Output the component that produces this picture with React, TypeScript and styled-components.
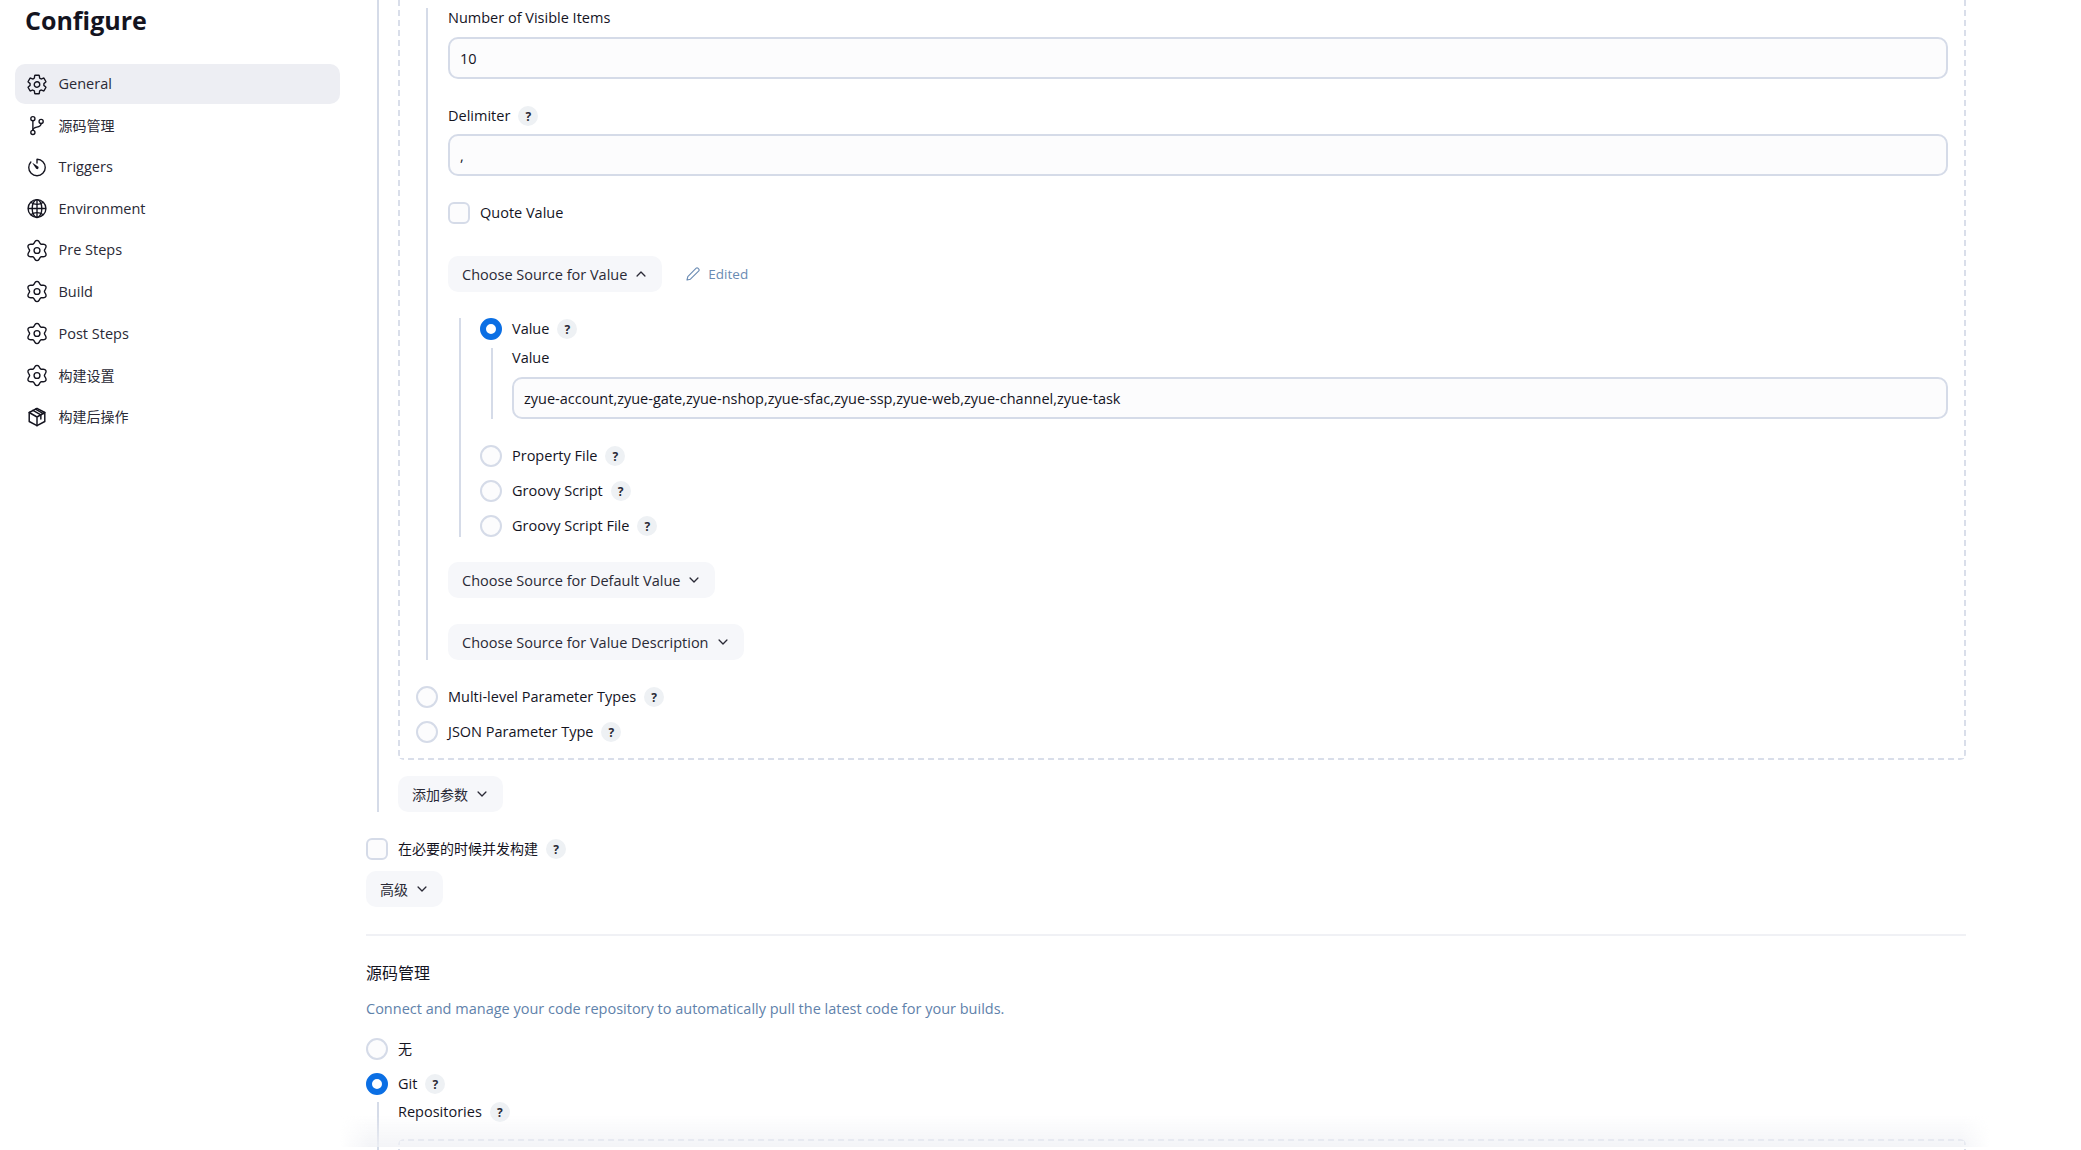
import styled, { createGlobalStyle, css } from 'styled-components';
import { IoSettingsOutline, IoGitBranchOutline, IoTimerOutline, IoGlobeOutline, IoChevronDown, IoChevronUp } from 'react-icons/io5';
import { ReactNode } from 'react';

const FONT = `"Open Sans", "Noto Sans CJK SC", sans-serif`;
const LINE = '#d5dbe8';

const GlobalStyle = createGlobalStyle`
  html, body {
    margin: 0;
    padding: 0;
    background: #fff;
    color: #14141f;
    font-family: ${FONT};
    font-size: 14.5px;
    overflow: hidden;
  }
  * { box-sizing: border-box; }
`;

// six lobed cog outline, sampled so the lobes stay round
const lobes = Array.from({ length: 73 }, (_, i) => {
    const a = (i / 72) * Math.PI * 2;
    const r = 9.6 + 1.5 * Math.cos(6 * a);
    return `${(12 + r * Math.sin(a)).toFixed(2)} ${(12 - r * Math.cos(a)).toFixed(2)}`;
}).join('L');

function CogIcon() {
    return (
        <svg viewBox="0 0 24 24" width="23" height="23" fill="none" stroke="currentColor" strokeWidth="1.5" strokeLinejoin="round">
            <path d={`M${lobes}Z`} />
            <circle cx="12" cy="12" r="3.2" />
        </svg>
    );
}

function PackageIcon() {
    return (
        <svg viewBox="0 0 24 24" width="22" height="22" fill="none" stroke="currentColor" strokeWidth="1.6" strokeLinejoin="round" strokeLinecap="round">
            <path d="M12 2.5l8.5 4.6v9.8L12 21.5l-8.5-4.6V7.1z" />
            <path d="M3.5 7.1L12 12l8.5-4.9M12 12v9.5" />
            <path d="M7.6 4.7l8.6 5M10.4 3.4l8.4 4.9M16.2 9.7v4.6" />
        </svg>
    );
}

const navItems = [
    { label: 'General', icon: <IoSettingsOutline />, active: true },
    { label: '源码管理', icon: <IoGitBranchOutline />, cjk: true },
    { label: 'Triggers', icon: <IoTimerOutline /> },
    { label: 'Environment', icon: <IoGlobeOutline /> },
    { label: 'Pre Steps', icon: <CogIcon /> },
    { label: 'Build', icon: <CogIcon /> },
    { label: 'Post Steps', icon: <CogIcon /> },
    { label: '构建设置', icon: <CogIcon />, cjk: true },
    { label: '构建后操作', icon: <PackageIcon />, cjk: true },
];

function Help() {
    return <HelpBadge>?</HelpBadge>;
}

function Dropdown({ label, open, mt, cjk }: { label: string; open?: boolean; mt: number; cjk?: boolean }) {
    return (
        <DropButton $mt={mt} $cjk={cjk}>
            {label}
            {open ? <IoChevronUp size={14} /> : <IoChevronDown size={14} />}
        </DropButton>
    );
}

function Radio({ label, checked, mt, help = true, cjk }: { label: ReactNode; checked?: boolean; mt: number; help?: boolean; cjk?: boolean }) {
    return (
        <ChoiceRow $mt={mt}>
            <RadioDot $checked={checked} />
            <ChoiceLabel $cjk={cjk}>{label}</ChoiceLabel>
            {help && <Help />}
        </ChoiceRow>
    );
}

export default function App() {
    return (
        <Page>
            <GlobalStyle />
            <Sidebar>
                <Title>Configure</Title>
                <Nav>
                    {navItems.map(item => (
                        <NavItem key={item.label} $active={item.active} $cjk={item.cjk}>
                            <NavIcon>{item.icon}</NavIcon>
                            <NavText $cjk={item.cjk}>{item.label}</NavText>
                        </NavItem>
                    ))}
                </Nav>
            </Sidebar>
            <Main>
                <ParamIndent>
                    <DashedBox>
                        <ValueIndent>
                            <FieldLabel $mt={16}><FieldText>Number of Visible Items</FieldText></FieldLabel>
                            <TextInput $mt={9} readOnly value="10" />
                            <FieldLabel $mt={27}><FieldText>Delimiter</FieldText><Help /></FieldLabel>
                            <TextInput $mt={8} readOnly value="," />
                            <ChoiceRow $mt={26}>
                                <CheckBox />
                                <ChoiceLabel>Quote Value</ChoiceLabel>
                            </ChoiceRow>
                            <SourceRow>
                                <Dropdown label="Choose Source for Value" open mt={0} />
                                <EditedTag>
                                    <svg viewBox="0 0 16 16" width="16" height="16" fill="none" stroke="currentColor" strokeWidth="1.1" strokeLinejoin="round">
                                        <path d="M2 14l.8-3.4L11.2 2.2a1.2 1.2 0 011.7 0l.9.9a1.2 1.2 0 010 1.7L5.4 13.2z" />
                                    </svg>
                                    Edited
                                </EditedTag>
                            </SourceRow>
                            <SourceIndent>
                                <Radio label="Value" checked mt={0} />
                                <ValueBlock>
                                    <FieldLabel $mt={0}><FieldText>Value</FieldText></FieldLabel>
                                    <TextInput $mt={9} readOnly value="zyue-account,zyue-gate,zyue-nshop,zyue-sfac,zyue-ssp,zyue-web,zyue-channel,zyue-task" />
                                </ValueBlock>
                                <Radio label="Property File" mt={26} />
                                <Radio label="Groovy Script" mt={13} />
                                <Radio label="Groovy Script File" mt={13} />
                            </SourceIndent>
                            <Dropdown label="Choose Source for Default Value" mt={25} />
                            <Dropdown label="Choose Source for Value Description" mt={26} />
                        </ValueIndent>
                        <Radio label="Multi-level Parameter Types" mt={26} />
                        <Radio label="JSON Parameter Type" mt={13} />
                    </DashedBox>
                    <Dropdown label="添加参数" mt={16} cjk />
                </ParamIndent>
                <ChoiceRow $mt={26}>
                    <CheckBox />
                    <ChoiceLabel $cjk>在必要的时候并发构建</ChoiceLabel>
                    <Help />
                </ChoiceRow>
                <Dropdown label="高级" mt={11} cjk />
                <Divider />
                <SectionTitle>源码管理</SectionTitle>
                <SectionDesc>Connect and manage your code repository to automatically pull the latest code for your builds.</SectionDesc>
                <Radio label="无" mt={19} help={false} cjk />
                <Radio label="Git" checked mt={13} />
                <RepoIndent>
                    <FieldLabel $mt={0}><FieldText>Repositories</FieldText><Help /></FieldLabel>
                    <RepoBox />
                </RepoIndent>
            </Main>
            <BottomFade />
        </Page>
    );
}

const dashedEdges = css`
  background-image:
    repeating-linear-gradient(to right, #d9deea 0 6px, transparent 6px 10px),
    repeating-linear-gradient(to right, #d9deea 0 6px, transparent 6px 10px),
    repeating-linear-gradient(to bottom, #d9deea 0 6px, transparent 6px 10px),
    repeating-linear-gradient(to bottom, #d9deea 0 6px, transparent 6px 10px);
  background-repeat: no-repeat;
  background-size: 100% 2px, 100% 2px, 2px 100%, 2px 100%;
  background-position: left top, left bottom, left top, right top;
  border-radius: 6px;
`;

const Page = styled.div`
  display: flex;
  width: 100vw;
  height: 100vh;
  overflow: hidden;
  position: relative;
`;

const Sidebar = styled.aside`
  flex: none;
  width: 366px;
  padding: 0 26px 0 15px;
`;

const Title = styled.h1`
  margin: 4px 0 0 10px;
  height: 32px;
  font-size: 25px;
  line-height: 32px;
  font-weight: 700;
  color: #14141f;
`;

const Nav = styled.nav`
  display: flex;
  flex-direction: column;
  gap: 1.6px;
  margin-top: 28px;
`;

const NavItem = styled.a<{ $active?: boolean; $cjk?: boolean }>`
  display: flex;
  align-items: center;
  gap: 10.5px;
  height: 40px;
  padding-left: 11px;
  border-radius: 10px;
  color: #2a2a36;
  background: ${({ $active }) => ($active ? '#edeef3' : 'transparent')};
`;

const NavText = styled.span<{ $cjk?: boolean }>`
  margin-bottom: 1px;
  font-size: ${({ $cjk }) => ($cjk ? '14px' : '14.5px')};
`;

const NavIcon = styled.span`
  display: flex;
  align-items: center;
  justify-content: center;
  width: 22px;
  height: 22px;
  font-size: 23px;
  color: #14141f;
`;

const Main = styled.main`
  flex: none;
  width: 1600px;
`;

const ParamIndent = styled.div`
  display: flow-root;
  margin-left: 11px;
  padding-left: 19px;
  border-left: 2px solid ${LINE};
  height: 812px;
`;

const DashedBox = styled.div`
  ${dashedEdges}
  margin-top: -10px;
  width: 1568px;
  height: 770px;
  padding: 2px 18px 2px 18px;
`;

const ValueIndent = styled.div`
  margin-left: 10px;
  padding-left: 20px;
  border-left: 2px solid ${LINE};
`;

const FieldLabel = styled.div<{ $mt: number }>`
  display: flex;
  align-items: center;
  gap: 8px;
  height: 20px;
  margin-top: ${({ $mt }) => $mt}px;
`;

const FieldText = styled.span`
  margin-bottom: 2px;
`;

const TextInput = styled.input<{ $mt: number }>`
  display: block;
  width: 100%;
  height: 42px;
  margin-top: ${({ $mt }) => $mt}px;
  padding: 0 10px;
  border: 2px solid ${LINE};
  border-radius: 10px;
  background: #fcfcfd;
  font-family: ${FONT};
  font-size: 14.5px;
  color: #14141f;
  outline: none;
`;

const HelpBadge = styled.span`
  display: inline-flex;
  align-items: center;
  justify-content: center;
  flex: none;
  width: 20px;
  height: 20px;
  border-radius: 50%;
  background: #eef1f4;
  font-size: 12px;
  font-weight: 700;
  color: #2a2a36;
`;

const ChoiceRow = styled.div<{ $mt: number }>`
  display: flex;
  align-items: center;
  height: 22px;
  margin-top: ${({ $mt }) => $mt}px;
`;

const ChoiceLabel = styled.span<{ $cjk?: boolean }>`
  margin: 0 8px 2px 10px;
  font-size: ${({ $cjk }) => ($cjk ? '14px' : '14.5px')};
`;

const CheckBox = styled.span`
  flex: none;
  width: 22px;
  height: 22px;
  border: 2px solid ${LINE};
  border-radius: 6px;
  background: #fcfcfd;
`;

const RadioDot = styled.span<{ $checked?: boolean }>`
  flex: none;
  width: 22px;
  height: 22px;
  border-radius: 50%;
  border: ${({ $checked }) => ($checked ? '6px solid #0b6fe4' : `2px solid ${LINE}`)};
  background: ${({ $checked }) => ($checked ? '#fff' : '#fcfcfd')};
`;

const DropButton = styled.button<{ $mt: number; $cjk?: boolean }>`
  display: flex;
  align-items: center;
  gap: 7px;
  height: 36px;
  margin-top: ${({ $mt }) => $mt}px;
  padding: 0 14px;
  border: none;
  border-radius: 10px;
  background: #f6f7fa;
  font-family: ${FONT};
  font-size: ${({ $cjk }) => ($cjk ? '14px' : '14.5px')};
  color: #2a2a36;
`;

const SourceRow = styled.div`
  display: flex;
  align-items: center;
  gap: 23px;
  margin-top: 32px;
`;

const EditedTag = styled.span`
  display: flex;
  align-items: center;
  gap: 7px;
  font-size: 13.5px;
  color: #6a8bb3;
`;

const SourceIndent = styled.div`
  margin-top: 26px;
  margin-left: 11px;
  padding-left: 19px;
  border-left: 2px solid ${LINE};
`;

const ValueBlock = styled.div`
  margin-top: 8px;
  margin-left: 11px;
  padding-left: 19px;
  border-left: 2px solid ${LINE};
`;

const Divider = styled.hr`
  height: 2px;
  margin: 27px 0 0;
  border: none;
  background: #f0f1f5;
`;

const SectionTitle = styled.h2`
  height: 22px;
  margin: 26px 0 0;
  font-size: 16px;
  line-height: 22px;
  font-weight: 400;
`;

const SectionDesc = styled.p`
  height: 20px;
  margin: 15px 0 0;
  line-height: 20px;
  color: #5f82ab;
`;

const RepoIndent = styled.div`
  margin-top: 7px;
  margin-left: 11px;
  padding-left: 19px;
  border-left: 2px solid ${LINE};
  height: 60px;
`;

const RepoBox = styled.div`
  ${dashedEdges}
  width: 1568px;
  height: 40px;
  margin-top: 17px;
`;

const BottomFade = styled.div`
  position: absolute;
  left: 340px;
  bottom: 3px;
  width: 1650px;
  height: 32px;
  background: linear-gradient(to bottom, rgba(240, 241, 245, 0), rgba(240, 241, 245, 0.8));
  mask-image: linear-gradient(to right, transparent, #000 30px, #000 calc(100% - 30px), transparent);
  pointer-events: none;
`;
